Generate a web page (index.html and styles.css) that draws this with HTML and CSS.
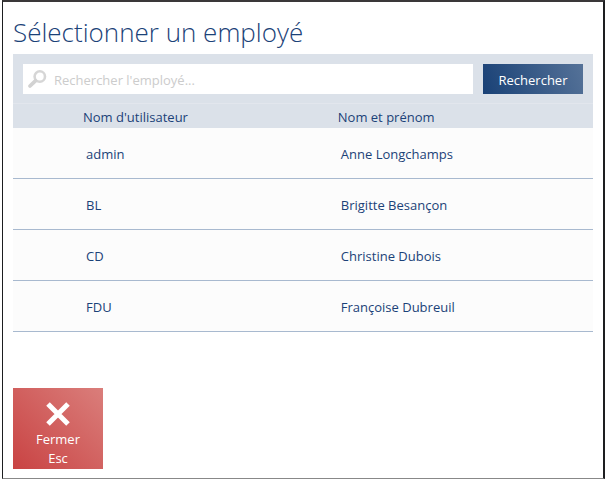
FILE: index.html
```html
<!DOCTYPE html>
<html lang="fr">
	<head>
		<title>Sélectionner un employé</title>
		<meta charset="UTF-8">
		<link rel="stylesheet" href="styles.css">
	</head>
	<body>
		<div class="dialog">
			<h1 class="title">Sélectionner un employé</h1>

			<form class="toolbar">
				<label class="search">
					<svg class="search-icon" viewBox="0 0 20 20" aria-hidden="true">
						<circle cx="12.8" cy="7.5" r="5.2" fill="none" stroke="#d6d6d6" stroke-width="2.6"/>
						<path d="M8.4 11.8L3 17" fill="none" stroke="#d2d2d2" stroke-width="3.8" stroke-linecap="round"/>
					</svg>
					<input class="search-input" type="text" name="search" placeholder="Rechercher l'employé..." aria-label="Rechercher l'employé">
				</label>
				<button class="search-button" type="button">Rechercher</button>
			</form>

			<table class="employees">
				<thead>
					<tr>
						<th class="user">Nom d'utilisateur</th>
						<th>Nom et prénom</th>
					</tr>
				</thead>
				<tbody>
					<tr>
						<td class="user">admin</td>
						<td>Anne Longchamps</td>
					</tr>
					<tr>
						<td class="user">BL</td>
						<td>Brigitte Besançon</td>
					</tr>
					<tr>
						<td class="user">CD</td>
						<td>Christine Dubois</td>
					</tr>
					<tr>
						<td class="user">FDU</td>
						<td>Françoise Dubreuil</td>
					</tr>
				</tbody>
			</table>

			<button class="close-button" type="button">
				<svg class="close-icon" viewBox="0 0 24 24" aria-hidden="true">
					<path d="M2 2L22 22M22 2L2 22" fill="none" stroke="#ffffff" stroke-width="5"/>
				</svg>
				<span>Fermer</span>
				<span>Esc</span>
			</button>
		</div>
	</body>
</html>
```

FILE: styles.css
```css
* {
	box-sizing: border-box;
}

body {
	margin: 0 0 2px 2px;
	background: #ffffff;
	color: #1b4278;
	font-family: "Open Sans", "Noto Sans", sans-serif;
	font-size: 13px;
}

.dialog {
	padding: 11px 10px 9px;
	border-top: 2px solid #3a3839;
	border-right: 2px solid #1d1e20;
	border-bottom: 1px solid #888888;
	border-left: 1px solid #1d1e20;
}

.title {
	margin: 0 0 3px;
	font-size: 26px;
	font-weight: 300;
	line-height: 38px;
}

.toolbar {
	display: flex;
	gap: 10px;
	padding: 10px 10px 9px;
	background: #dbe1e9;
	border-bottom: 1px solid #e2e6ed;
}

.search {
	display: flex;
	flex: 1;
	align-items: center;
	gap: 7px;
	height: 30px;
	padding: 0 4px;
	background: #ffffff;
}

.search-icon {
	width: 20px;
	height: 20px;
}

.search-input {
	flex: 1;
	min-width: 0;
	padding: 2px 0 0;
	border: 0;
	outline: 0;
	background: none;
	color: inherit;
	font: inherit;
}

.search-input::placeholder {
	color: #cccccc;
}

.search-button {
	width: 100px;
	height: 30px;
	padding: 2px 0 0;
	border: 0;
	background: linear-gradient(70deg, #194176, #557298);
	color: #ffffff;
	font: inherit;
}

.employees {
	width: 100%;
	border-spacing: 0;
	table-layout: fixed;
}

.employees th {
	height: 24px;
	padding: 2px 0 0;
	background: #dbe1e9;
	font-weight: 400;
	text-align: left;
}

.employees td {
	height: 51px;
	padding: 2px 0 0 3px;
	background: #fcfcfc;
	border-bottom: 1px solid #a8b9cf;
}

.employees .user {
	width: 56%;
	padding-left: 70px;
}

.employees td.user {
	padding-left: 73px;
}

.close-button {
	display: flex;
	flex-direction: column;
	align-items: center;
	width: 90px;
	height: 81px;
	margin-top: 56px;
	padding: 14px 0 0;
	border: 0;
	background: linear-gradient(45deg, #c94343, #da7e7b);
	color: #ffffff;
	font: inherit;
	line-height: 19px;
}

.close-icon {
	width: 24px;
	height: 24px;
	margin-bottom: 4px;
}
```
